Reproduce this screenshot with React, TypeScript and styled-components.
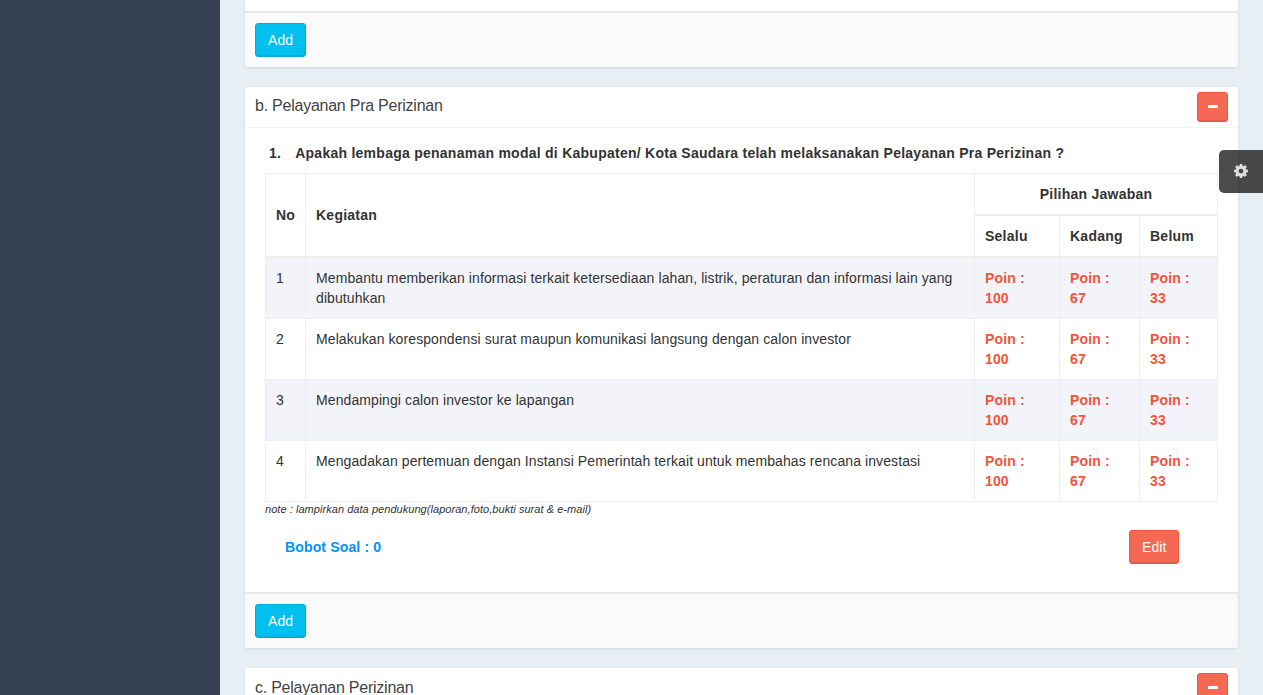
import React from 'react';
import styled, { createGlobalStyle } from 'styled-components';

const Global = createGlobalStyle`
  * { box-sizing: border-box; }
  body { margin: 0; overflow: hidden; font: 14px/20px "Liberation Sans", Arial, sans-serif; color: #333; background: #e7eff5; }
`;

const Page = styled.div`
  display: flex;
  height: 695px;
  overflow: hidden;
`;
const Sidebar = styled.aside`
  flex: 0 0 220px;
  background: #354052;
`;
const Content = styled.main`
  flex: 1;
  display: flex;
  flex-direction: column;
  gap: 20px;
  padding: 0 25px;
`;
const Box = styled.section`
  flex: none;
  background: #f9fafc;
  border-radius: 3px;
  box-shadow: 0 1px 3px rgba(0, 0, 0, 0.1);
`;
const BoxHeader = styled.header`
  display: flex;
  justify-content: space-between;
  align-items: flex-start;
  height: 41px;
  padding: 5px 10px 0;
  background: #fff;
  border-bottom: 1px solid #f4f4f4;
  border-radius: 3px 3px 0 0;
`;
const BoxTitle = styled.h3<{ $top: number }>`
  margin: ${(p) => p.$top}px 0 0;
  font-size: 16px;
  line-height: 20px;
  font-weight: 400;
  letter-spacing: -0.24px;
  color: #444;
`;
const BoxBody = styled.div<{ $height: number }>`
  height: ${(p) => p.$height}px;
  padding: 0 20px;
  background: #fff;
  border-radius: 0 0 3px 3px;
  overflow: hidden;
`;
const BoxFooter = styled.footer`
  display: flex;
  padding: 10px;
  border-top: 2px solid #e6e7e8;
`;
const Button = styled.button<{ $tone: 'info' | 'danger' }>`
  height: 34px;
  padding: 0 12px;
  font: 14px/20px "Liberation Sans", Arial, sans-serif;
  letter-spacing: 0.1px;
  color: #fff;
  background: ${(p) => (p.$tone === 'info' ? '#00c0ef' : '#f56954')};
  border: 1px solid ${(p) => (p.$tone === 'info' ? '#00acd6' : '#f4543c')};
  border-radius: 3px;
  box-shadow: inset 0 -1px 0 rgba(0, 0, 0, 0.09);
`;
const AddButton = styled(Button)`
  width: 51px;
`;
const EditButton = styled(Button)`
  width: 50px;
`;
const ToggleButton = styled(Button)`
  display: flex;
  align-items: center;
  justify-content: center;
  width: 31px;
  height: 30px;
  padding: 0 0 0 1px;
`;
const Question = styled.div`
  display: flex;
  gap: 14px;
  padding: 15px 4px 0;
  margin-bottom: 10px;
  font-weight: 700;
  letter-spacing: 0.255px;
  white-space: nowrap;
`;
const Table = styled.table`
  width: 953px;
  table-layout: fixed;
  border-collapse: collapse;
  border: 1px solid #eee;
`;
const Th = styled.th<{ $center?: boolean }>`
  padding: 10px;
  text-align: ${(p) => (p.$center ? 'center' : 'left')};
  vertical-align: middle;
  letter-spacing: 0.25px;
  border: 1px solid #eee;
  border-bottom-width: 2px;
`;
const Row = styled.tr`
  &:nth-child(odd) { background: #f3f4f9; }
`;
const Td = styled.td`
  padding: 10px;
  height: 61px;
  vertical-align: top;
  letter-spacing: 0.093px;
  border: 1px solid #eee;
`;
const Points = styled(Td)`
  font-weight: 700;
  letter-spacing: 0.15px;
  color: #f4543c;
`;
const Note = styled.p`
  margin: 0;
  font-size: 11px;
  line-height: 14px;
  letter-spacing: 0.05px;
  font-style: italic;
`;
const Summary = styled.div`
  display: flex;
  align-items: center;
  justify-content: space-between;
  padding: 14px 39px 0 20px;
`;
const Weight = styled.strong`
  letter-spacing: 0.15px;
  color: #0093ff;
`;
const SettingsTab = styled.div`
  position: absolute;
  top: 150px;
  right: 0;
  display: flex;
  align-items: center;
  justify-content: center;
  width: 44px;
  height: 43px;
  padding-bottom: 1px;
  background: rgba(0, 0, 0, 0.7);
  border-radius: 5px 0 0 5px;
`;

const Minus = () => (
  <svg width="10" height="4" viewBox="0 0 10 4">
    <rect width="10" height="3" rx="0.5" fill="#fff" />
  </svg>
);
const Cog = () => (
  <svg width="14" height="14" viewBox="0 128 1536 1536" fill="#ddd">
    <path d="M1024 896q0-106-75-181t-181-75-181 75-75 181 75 181 181 75 181-75 75-181zm512-109v222q0 12-8 23t-20 13l-185 28q-19 54-39 91 35 50 107 138 10 12 10 25t-9 23q-27 37-99 108t-94 71q-12 0-26-9l-138-108q-44 23-91 38-16 136-29 186-7 28-36 28h-222q-14 0-24.500-8.500t-11.500-21.500l-28-184q-49-16-90-37l-141 107q-10 9-25 9-14 0-25-11-126-114-165-168-7-10-7-23 0-12 8-23 15-21 51-66.500t54-70.500q-27-50-41-99l-183-27q-13-2-21-12.500t-8-23.500v-222q0-12 8-23t19-13l186-28q14-46 39-92-40-57-107-138-10-12-10-24 0-10 9-23 26-36 98.500-107.500t94.500-71.500q13 0 26 10l138 107q44-23 91-38 16-136 29-186 7-28 36-28h222q14 0 24.500 8.500t11.500 21.500l28 184q49 16 90 37l142-107q9-9 24-9 13 0 25 10 129 119 165 170 7 8 7 22 0 12-8 23-15 21-51 66.500t-54 70.500q26 50 41 98l183 28q13 2 21 12.500t8 23.500z" />
  </svg>
);

const activities = [
  'Membantu memberikan informasi terkait ketersediaan lahan, listrik, peraturan dan informasi lain yang dibutuhkan',
  'Melakukan korespondensi surat maupun komunikasi langsung dengan calon investor',
  'Mendampingi calon investor ke lapangan',
  'Mengadakan pertemuan dengan Instansi Pemerintah terkait untuk membahas rencana investasi',
];
const points = [100, 67, 33];

const Header = ({ title, top = 4 }: { title: string; top?: number }) => (
  <BoxHeader>
    <BoxTitle $top={top}>{title}</BoxTitle>
    <ToggleButton $tone="danger" aria-label="Collapse"><Minus /></ToggleButton>
  </BoxHeader>
);
const Footer = () => (
  <BoxFooter><AddButton $tone="info">Add</AddButton></BoxFooter>
);

export default function App() {
  return (
    <Page>
      <Global />
      <Sidebar />
      <Content>
        <Box>
          <BoxBody $height={11} />
          <Footer />
        </Box>
        <Box>
          <Header title="b. Pelayanan Pra Perizinan" />
          <BoxBody $height={464}>
            <Question>
              <span>1.</span>
              <span>Apakah lembaga penanaman modal di Kabupaten/ Kota Saudara telah melaksanakan Pelayanan Pra Perizinan ?</span>
            </Question>
            <Table>
              <colgroup>
                <col style={{ width: 40 }} />
                <col style={{ width: 669 }} />
                <col style={{ width: 85 }} />
                <col style={{ width: 80 }} />
                <col style={{ width: 78 }} />
              </colgroup>
              <thead>
                <tr>
                  <Th rowSpan={2}>No</Th>
                  <Th rowSpan={2}>Kegiatan</Th>
                  <Th colSpan={3} $center>Pilihan Jawaban</Th>
                </tr>
                <tr>
                  <Th>Selalu</Th>
                  <Th>Kadang</Th>
                  <Th>Belum</Th>
                </tr>
              </thead>
              <tbody>
                {activities.map((text, i) => (
                  <Row key={text}>
                    <Td>{i + 1}</Td>
                    <Td>{text}</Td>
                    {points.map((p) => (
                      <Points key={p}>Poin :<br />{p}</Points>
                    ))}
                  </Row>
                ))}
              </tbody>
            </Table>
            <Note>note : lampirkan data pendukung(laporan,foto,bukti surat &amp; e-mail)</Note>
            <Summary>
              <Weight>Bobot Soal : 0</Weight>
              <EditButton $tone="danger">Edit</EditButton>
            </Summary>
          </BoxBody>
          <Footer />
        </Box>
        <Box>
          <Header title="c. Pelayanan Perizinan" top={5} />
          <BoxBody $height={100} />
        </Box>
      </Content>
      <SettingsTab><Cog /></SettingsTab>
    </Page>
  );
}
